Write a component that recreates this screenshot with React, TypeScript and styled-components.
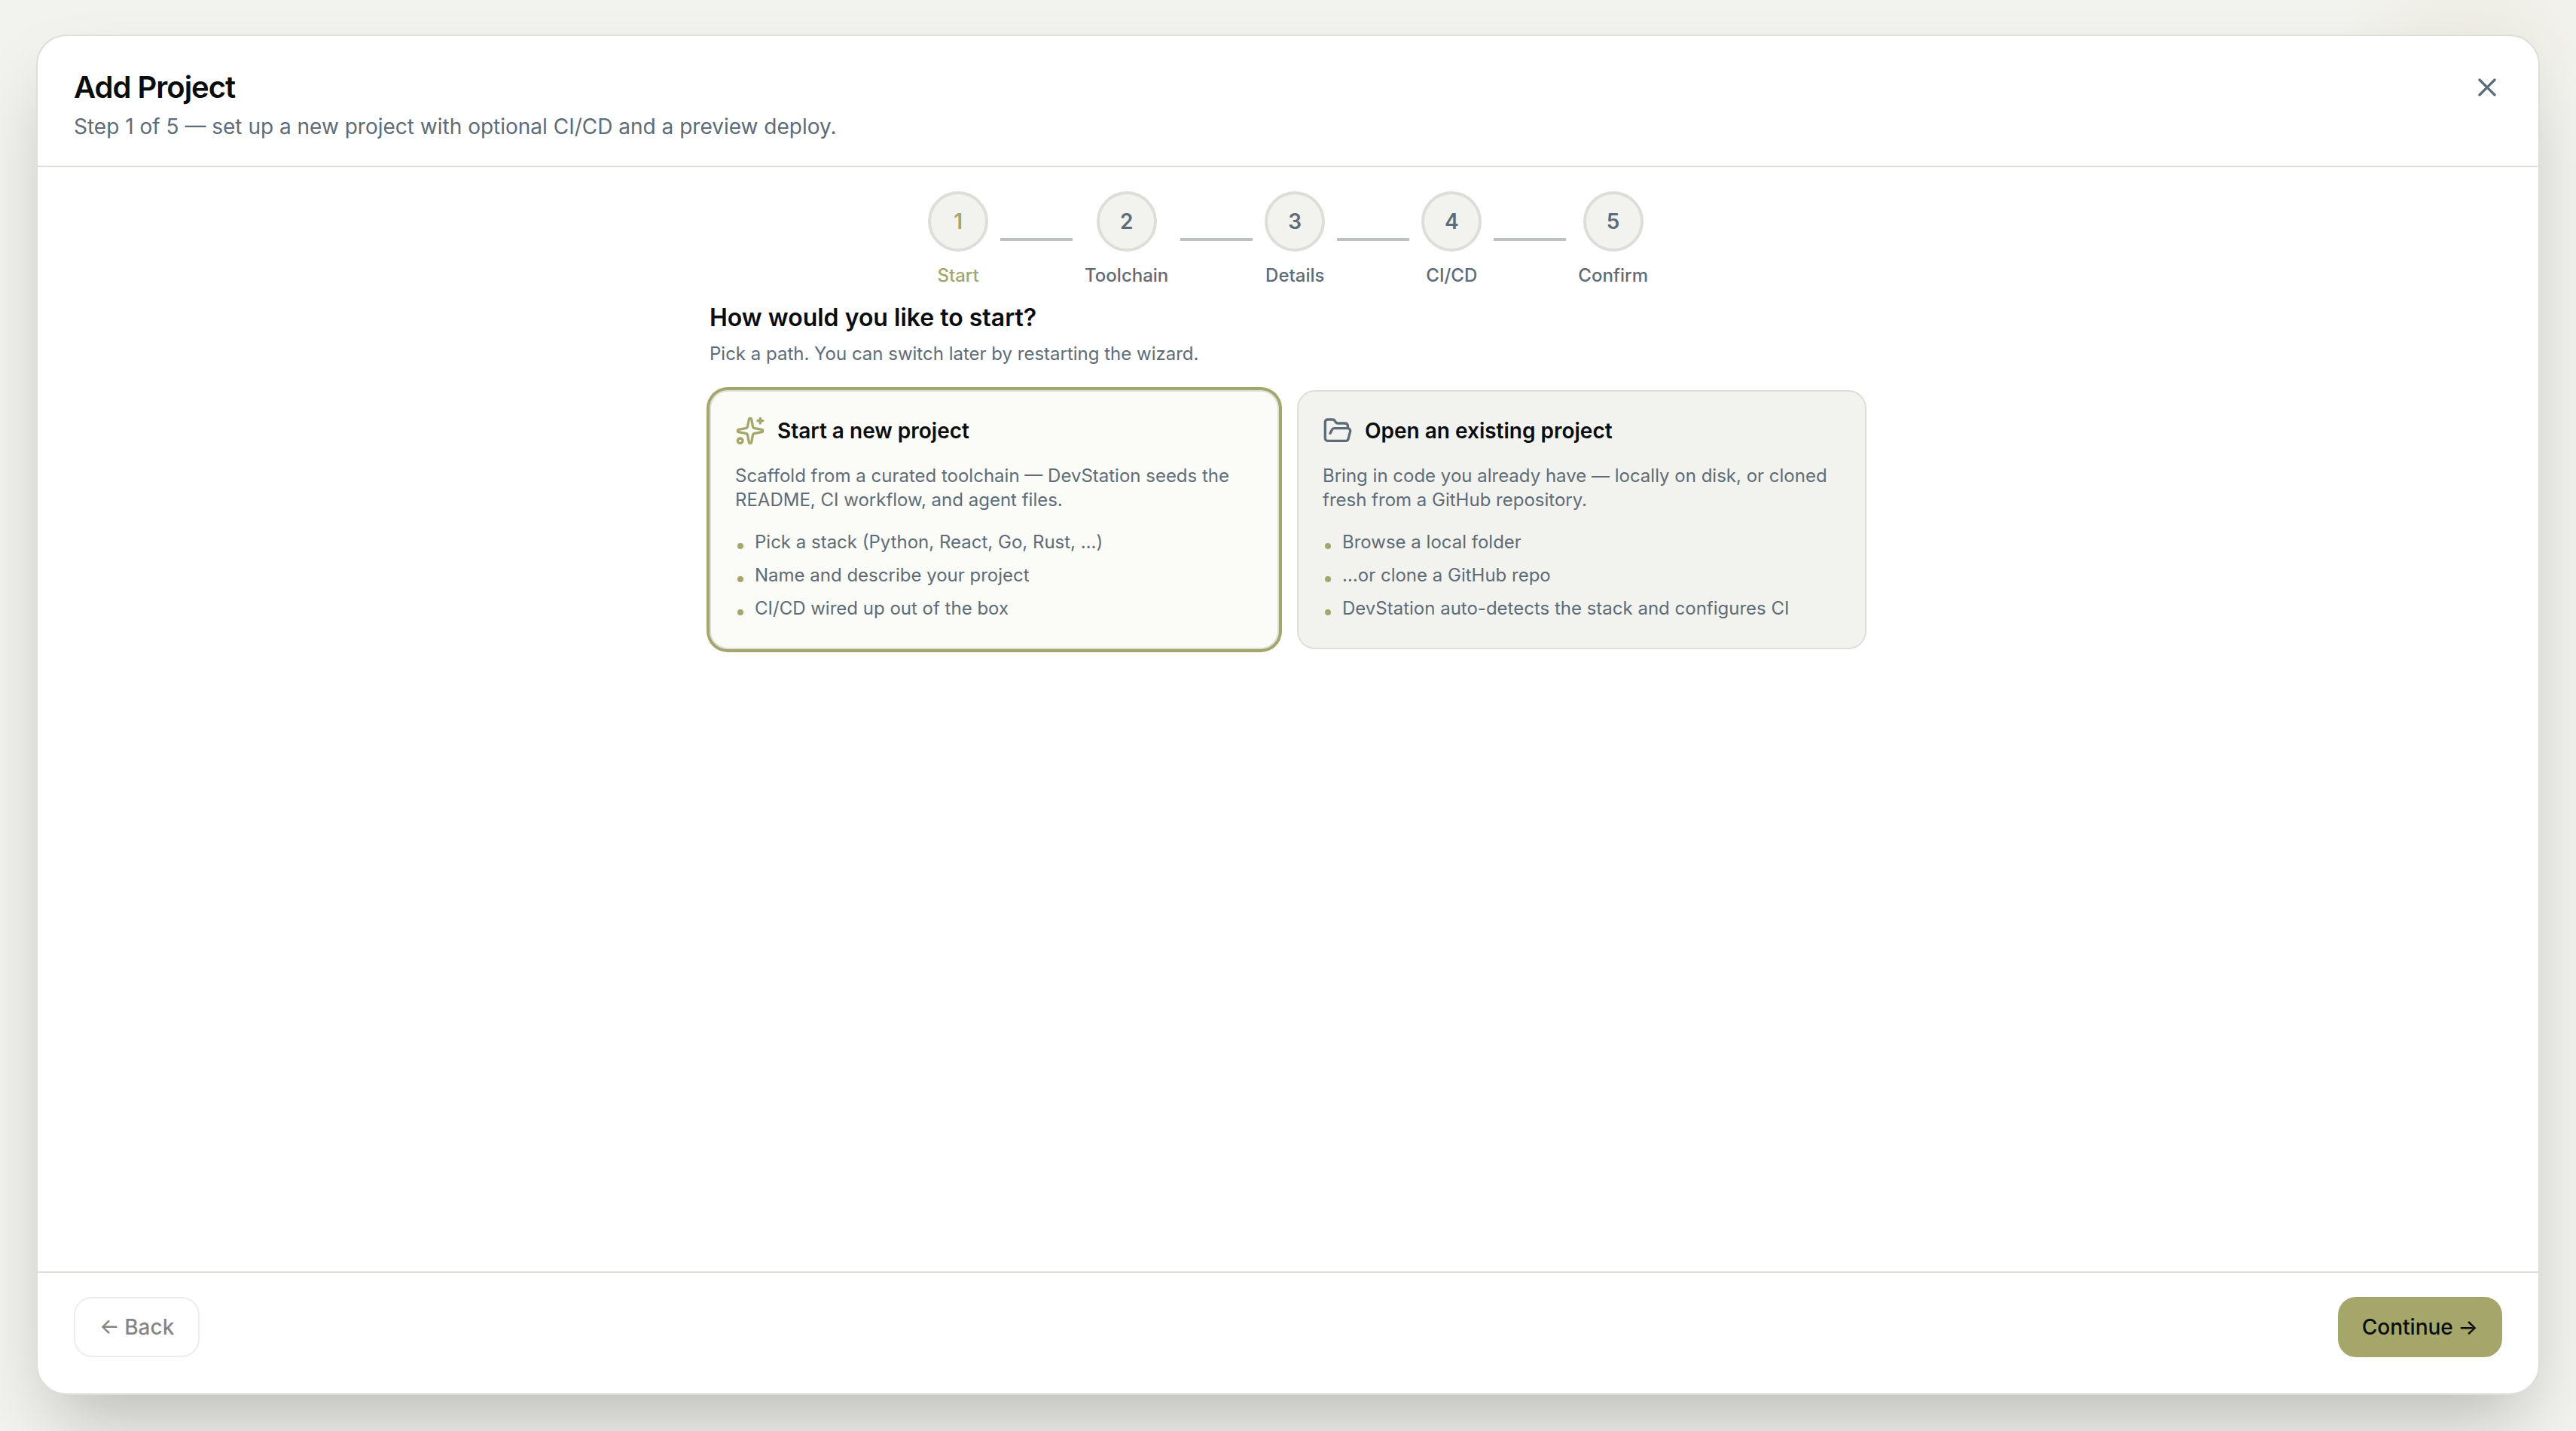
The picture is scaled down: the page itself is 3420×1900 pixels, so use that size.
import React from "react";
import styled, { createGlobalStyle, css } from "styled-components";
import { FolderOpen, Sparkles, X } from "lucide-react";

const color = {
  page: "#f2f3ee",
  surface: "#ffffff",
  line: "#dddeda",
  accent: "#a5a66a",
  ink: "#0b0c0e",
  muted: "#5e6b78",
};

const GlobalStyle = createGlobalStyle`
  * { box-sizing: border-box; }
  body {
    margin: 0;
    background: ${color.page};
    color: ${color.ink};
    font-family: Inter, "Liberation Sans", sans-serif;
    -webkit-font-smoothing: antialiased;
  }
  h1, h2, h3, p, ul { margin: 0; padding: 0; }
  button { font-family: inherit; }
`;

const Backdrop = styled.div`
  height: 1900px;
  padding: 46px 48px 48px;
  overflow: hidden;
  background:
    radial-gradient(ellipse 170px 110px at 3280px 52px, rgba(226, 216, 192, 0.24), rgba(226, 216, 192, 0.15) 50%, rgba(226, 216, 192, 0) 100%),
    ${color.page};
`;

const Dialog = styled.section`
  display: flex;
  flex-direction: column;
  height: 1806px;
  border: 2px solid ${color.line};
  border-radius: 40px;
  background: ${color.surface};
  box-shadow: 0 50px 100px -24px rgba(0, 0, 0, 0.25);
`;

const Header = styled.header`
  display: flex;
  justify-content: space-between;
  align-items: flex-start;
  height: 174px;
  padding: 40px 48px 0;
  border-bottom: 2px solid ${color.line};
`;

const Title = styled.h1`
  font-size: 40px;
  line-height: 56px;
  font-weight: 600;
  letter-spacing: -1px;
`;

const Subtitle = styled.p`
  margin-top: 4px;
  font-size: 28px;
  line-height: 40px;
  color: ${color.muted};
`;

const CloseButton = styled.button`
  display: flex;
  align-items: center;
  justify-content: center;
  width: 40px;
  height: 40px;
  margin-top: 8px;
  padding: 0;
  border: 0;
  background: none;
  color: ${color.muted};
`;

const Body = styled.main`
  flex: 1;
  display: flex;
  flex-direction: column;
  align-items: center;
  padding-top: 32px;
`;

const Stepper = styled.div`
  display: flex;
  align-items: flex-start;
  gap: 16px;
  height: 136px;
`;

const Step = styled.div<{ $active?: boolean }>`
  display: flex;
  flex-direction: column;
  align-items: center;
  gap: 16px;
  color: ${(p) => (p.$active ? color.accent : color.muted)};
`;

const StepCircle = styled.div`
  display: flex;
  align-items: center;
  justify-content: center;
  width: 80px;
  height: 80px;
  border: 4px solid ${color.line};
  border-radius: 50%;
  background: ${color.page};
  font-size: 28px;
  font-weight: 600;
`;

const StepLabel = styled.span`
  font-size: 24px;
  line-height: 32px;
  font-weight: 500;
`;

const StepLine = styled.div`
  width: 96px;
  height: 4px;
  margin-top: 62px;
  background: #bcc1c7;
`;

const Content = styled.div`
  width: 1536px;
`;

const Question = styled.h2`
  padding-top: 8px;
  font-size: 32px;
  line-height: 48px;
  font-weight: 600;
`;

const Hint = styled.p`
  margin-top: 8px;
  font-size: 24px;
  line-height: 32px;
  color: ${color.muted};
`;

const Choices = styled.div`
  display: grid;
  grid-template-columns: 1fr 1fr;
  gap: 24px;
  margin-top: 32px;
`;

const Choice = styled.article<{ $selected?: boolean }>`
  height: 344px;
  padding: 32px;
  border: 2px solid ${color.line};
  border-radius: 24px;
  background: ${color.page};
  ${(p) =>
    p.$selected &&
    css`
      background: #fbfcf7;
      box-shadow: 0 0 0 4px ${color.accent};
    `}
`;

const ChoiceHead = styled.div<{ $selected?: boolean }>`
  display: flex;
  align-items: center;
  gap: 16px;
  height: 40px;

  svg {
    color: ${(p) => (p.$selected ? color.accent : color.muted)};
  }
`;

const ChoiceTitle = styled.h3`
  font-size: 28px;
  line-height: 40px;
  font-weight: 600;
`;

const ChoiceText = styled.p`
  margin-top: 24px;
  font-size: 24px;
  line-height: 32px;
  color: ${color.muted};
`;

const Points = styled.ul`
  display: flex;
  flex-direction: column;
  gap: 12px;
  margin-top: 24px;
  list-style: none;
`;

const Point = styled.li`
  display: flex;
  align-items: flex-start;
  gap: 15px;
  font-size: 24px;
  line-height: 32px;
  color: ${color.muted};

  &::before {
    content: "";
    flex: none;
    width: 8px;
    height: 8px;
    margin: 17px 0 0 3px;
    border-radius: 50%;
    background: ${color.accent};
  }
`;

const Footer = styled.footer`
  display: flex;
  justify-content: space-between;
  align-items: flex-start;
  height: 162px;
  padding: 32px 48px 0;
  border-top: 2px solid ${color.line};
`;

const Button = styled.button<{ $primary?: boolean }>`
  height: 80px;
  padding: 0 32px;
  border: ${(p) => (p.$primary ? "0" : `2px solid ${color.line}`)};
  border-radius: 24px;
  background: ${(p) => (p.$primary ? color.accent : color.surface)};
  color: ${color.ink};
  font-size: 28px;
  font-weight: 500;
  word-spacing: -1px;

  &:disabled {
    opacity: 0.5;
  }
`;

const steps = ["Start", "Toolchain", "Details", "CI/CD", "Confirm"];

const choices = [
  {
    title: "Start a new project",
    icon: Sparkles,
    text: "Scaffold from a curated toolchain — DevStation seeds the README, CI workflow, and agent files.",
    points: [
      "Pick a stack (Python, React, Go, Rust, …)",
      "Name and describe your project",
      "CI/CD wired up out of the box",
    ],
  },
  {
    title: "Open an existing project",
    icon: FolderOpen,
    text: "Bring in code you already have — locally on disk, or cloned fresh from a GitHub repository.",
    points: [
      "Browse a local folder",
      "…or clone a GitHub repo",
      "DevStation auto-detects the stack and configures CI",
    ],
  },
];

export default function App() {
  return (
    <>
      <GlobalStyle />
      <Backdrop>
        <Dialog>
          <Header>
            <div>
              <Title>Add Project</Title>
              <Subtitle>Step 1 of 5 — set up a new project with optional CI/CD and a preview deploy.</Subtitle>
            </div>
            <CloseButton aria-label="Close">
              <X size={40} strokeWidth={2} />
            </CloseButton>
          </Header>
          <Body>
            <Stepper>
              {steps.map((label, i) => (
                <React.Fragment key={label}>
                  {i > 0 && <StepLine />}
                  <Step $active={i === 0}>
                    <StepCircle>{i + 1}</StepCircle>
                    <StepLabel>{label}</StepLabel>
                  </Step>
                </React.Fragment>
              ))}
            </Stepper>
            <Content>
              <Question>How would you like to start?</Question>
              <Hint>Pick a path. You can switch later by restarting the wizard.</Hint>
              <Choices>
                {choices.map(({ title, icon: Icon, text, points }, i) => (
                  <Choice key={title} $selected={i === 0}>
                    <ChoiceHead $selected={i === 0}>
                      <Icon size={40} strokeWidth={2} />
                      <ChoiceTitle>{title}</ChoiceTitle>
                    </ChoiceHead>
                    <ChoiceText>{text}</ChoiceText>
                    <Points>
                      {points.map((point) => (
                        <Point key={point}>{point}</Point>
                      ))}
                    </Points>
                  </Choice>
                ))}
              </Choices>
            </Content>
          </Body>
          <Footer>
            <Button disabled>← Back</Button>
            <Button $primary>Continue →</Button>
          </Footer>
        </Dialog>
      </Backdrop>
    </>
  );
}
